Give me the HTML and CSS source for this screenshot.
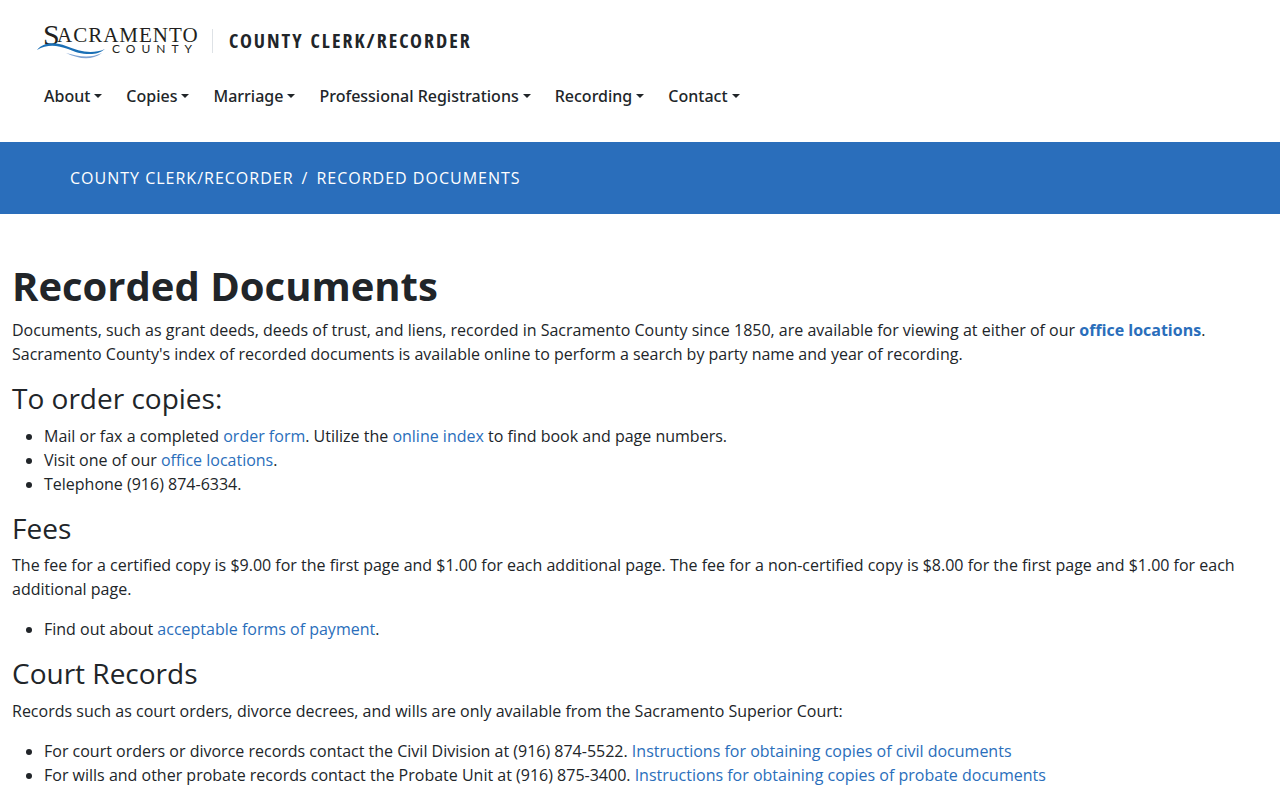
FILE: index.html
```html
<!DOCTYPE html>
<html lang="en">
<head>
<meta charset="utf-8">
<meta name="viewport" content="width=device-width, initial-scale=1">
<title>Recorded Documents</title>
<link rel="stylesheet" href="styles.css">
</head>
<body>
<header class="site-header">
  <div class="brand">
    <a class="brand-logo" href="#" aria-label="Sacramento County home">
      <svg width="164" height="42" viewBox="0 0 164 42" role="img" aria-label="Sacramento County">
        <text class="logo-initial" x="7" y="25">S</text>
        <text class="logo-name" x="21" y="22">ACRAMENTO</text>
        <text class="logo-county" x="76" y="33">COUNTY</text>
        <path fill="#1a6fb5" d="M1 30C8 22 19 22 30 26C43 31 55 35 69 29C64 33 60 34 54 34C45 34 39 32 32 29C21 25 11 24 1 30Z"/>
        <path fill="#7fa3d3" d="M30 33C42 36 53 39 66 33C55 41 43 39 30 33Z"/>
      </svg>
    </a>
    <a class="brand-title" href="#">County Clerk/Recorder</a>
  </div>
  <nav class="main-nav" aria-label="Main">
    <button class="nav-item" type="button">About</button>
    <button class="nav-item" type="button">Copies</button>
    <button class="nav-item" type="button">Marriage</button>
    <button class="nav-item" type="button">Professional Registrations</button>
    <button class="nav-item" type="button">Recording</button>
    <button class="nav-item" type="button">Contact</button>
  </nav>
</header>
<nav class="breadcrumb" aria-label="Breadcrumb">
  <a href="#">County Clerk/Recorder</a>
  <span>/</span>
  <a href="#">Recorded Documents</a>
</nav>
<main class="content">
  <h1>Recorded Documents</h1>
  <p>Documents, such as grant deeds, deeds of trust, and liens, recorded in Sacramento County since 1850, are available for viewing at either of our <a class="strong" href="#">office locations</a>. Sacramento County's index of recorded documents is available online to perform a search by party name and year of recording.</p>
  <h2>To order copies:</h2>
  <ul>
    <li>Mail or fax a completed <a href="#">order form</a>. Utilize the <a href="#">online index</a> to find book and page numbers.</li>
    <li>Visit one of our <a href="#">office locations</a>.</li>
    <li>Telephone (916) 874-6334.</li>
  </ul>
  <h2>Fees</h2>
  <p>The fee for a certified copy is $9.00 for the first page and $1.00 for each additional page. The fee for a non-certified copy is $8.00 for the first page and $1.00 for each additional page.</p>
  <ul>
    <li>Find out about <a href="#">acceptable forms of payment</a>.</li>
  </ul>
  <h2>Court Records</h2>
  <p>Records such as court orders, divorce decrees, and wills are only available from the Sacramento Superior Court:</p>
  <ul class="last">
    <li>For court orders or divorce records contact the Civil Division at (916) 874-5522. <a href="#">Instructions for obtaining copies of civil documents</a></li>
    <li>For wills and other probate records contact the Probate Unit at (916) 875-3400. <a href="#">Instructions for obtaining copies of probate documents</a></li>
  </ul>
</main>
</body>
</html>
```
FILE: styles.css
```css
* {
  box-sizing: border-box;
}

body {
  margin: 0;
  background: #fff;
  color: #212529;
  font-family: "Open Sans", "Noto Sans", sans-serif;
  font-size: 16px;
  line-height: 24px;
}

a {
  color: #2a6ebb;
  text-decoration: none;
}

.site-header {
  padding: 20px 36px 26px;
}

.brand {
  display: flex;
  align-items: center;
}

.brand-logo {
  display: flex;
}

.logo-initial,
.logo-name {
  fill: #231f20;
  font-family: "Liberation Serif", serif;
}

.logo-initial {
  font-size: 30px;
}

.logo-name {
  font-size: 21px;
  letter-spacing: 1px;
}

.logo-county {
  fill: #231f20;
  font-family: Lato, sans-serif;
  font-size: 12px;
  letter-spacing: 6px;
}

.brand-title {
  margin-left: 12px;
  padding-left: 16px;
  border-left: 1px solid #dee2e6;
  color: #212529;
  font-family: "Open Sans Condensed", "Roboto Condensed", "Liberation Sans Narrow", "Open Sans", sans-serif;
  font-size: 20px;
  font-weight: 700;
  letter-spacing: 2px;
  text-transform: uppercase;
}

.main-nav {
  display: flex;
  flex-wrap: wrap;
  gap: 8px;
  padding-top: 14px;
}

.nav-item {
  padding: 8px;
  border: 0;
  background: none;
  color: #212529;
  font: inherit;
  font-family: "Noto Sans", "Open Sans", sans-serif;
  font-weight: 500;
  cursor: pointer;
}

.nav-item::after {
  display: inline-block;
  margin-left: 4px;
  border: 4px solid transparent;
  border-top-color: currentColor;
  border-bottom: 0;
  vertical-align: 4px;
  content: "";
}

.breadcrumb {
  display: flex;
  gap: 8px;
  padding: 24px 70px;
  background: #2a6ebb;
  color: #fff;
  letter-spacing: 1px;
  text-transform: uppercase;
}

.breadcrumb a {
  color: inherit;
}

.content {
  padding: 48px 12px 12px;
}

h1,
h2 {
  margin: 0 0 8px;
  line-height: 1.2;
}

h1 {
  font-size: 40px;
  font-weight: 700;
}

h2 {
  font-size: 28px;
  font-weight: 500;
}

p,
ul {
  margin: 0 0 16px;
}

ul {
  padding-left: 32px;
}

.last {
  margin-bottom: 0;
}

.strong {
  font-weight: 700;
}
```
